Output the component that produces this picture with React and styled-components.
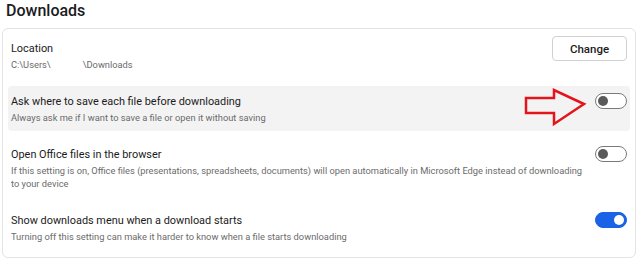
import React from "react";
import styled, { createGlobalStyle } from "styled-components";

const GlobalStyle = createGlobalStyle`
  html, body { margin: 0; padding: 0; background: #ffffff; }
  body { font-family: Roboto, "Open Sans", Arial, sans-serif; color: #1b1b1b; }
`;

const Page = styled.div`
  width: 640px;
  height: 260px;
  box-sizing: border-box;
  padding: 0 4px 0 2px;
  overflow: hidden;
`;

const Heading = styled.h2`
  margin: 0;
  padding-left: 4px;
  font-size: 16px;
  font-weight: 500;
  line-height: 22px;
  height: 28px;
  color: #1b1b1b;
`;

const Card = styled.section`
  border: 1px solid #e3e3e3;
  border-radius: 6px;
  padding: 0 5px 7px;
  display: flex;
  flex-direction: column;
  gap: 8px;
  background: #fff;
`;

const Row = styled.div`
  position: relative;
  display: flex;
  align-items: flex-start;
  justify-content: space-between;
  gap: 8px;
  padding: 7px 3px 7px;
  border-radius: 4px;
  background: ${(p) => (p.$highlight ? "#f3f3f3" : "transparent")};
`;

const TextBlock = styled.div`
  flex: 1;
  min-width: 0;
  margin-top: ${(p) => p.$offset || 0}px;
`;

const Title = styled.div`
  font-size: 10.9px;
  line-height: 17px;
  color: #1b1b1b;
`;

const Sub = styled.div`
  margin-top: 1px;
  font-size: 9.3px;
  line-height: 13px;
  color: #6b6b6b;
`;

const Redacted = styled.span`
  display: inline-block;
  width: 32px;
`;

const Button = styled.button`
  width: 75px;
  height: 25px;
  box-sizing: border-box;
  border: 1px solid #d1d1d1;
  border-radius: 4px;
  background: #fff;
  font-family: inherit;
  font-size: 11.5px;
  font-weight: 500;
  color: #1b1b1b;
  padding: 0;
  flex-shrink: 0;
`;

const Toggle = styled.div`
  position: relative;
  flex-shrink: 0;
  width: 32px;
  height: 16px;
  box-sizing: border-box;
  border-radius: 8px;
  border: 1px solid ${(p) => (p.$on ? "#1a62e6" : "#7a7a7a")};
  background: ${(p) => (p.$on ? "#1a62e6" : "#ffffff")};
`;

const Knob = styled.span`
  position: absolute;
  top: 2px;
  ${(p) => (p.$on ? "right: 2px;" : "left: 2px;")}
  width: 10px;
  height: 10px;
  border-radius: 50%;
  background: ${(p) => (p.$on ? "#ffffff" : "#5a5a5a")};
`;

const Arrow = styled.svg`
  position: absolute;
  right: 42px;
  top: 2px;
`;

function Switch({ on }) {
  return (
    <Toggle $on={on}>
      <Knob $on={on} />
    </Toggle>
  );
}

export default function App() {
  return (
    <>
      <GlobalStyle />
      <Page>
        <Heading>Downloads</Heading>
        <Card>
          <Row>
            <TextBlock $offset={4}>
              <Title>Location</Title>
              <Sub>
                C:\Users\<Redacted />\Downloads
              </Sub>
            </TextBlock>
            <Button>Change</Button>
          </Row>
          <Row $highlight>
            <TextBlock>
              <Title>Ask where to save each file before downloading</Title>
              <Sub>Always ask me if I want to save a file or open it without saving</Sub>
            </TextBlock>
            <Arrow width="64" height="40" viewBox="0 0 64 40">
              <polygon
                points="2,10 30,10 30,2 60,16 30,36 30,25 2,25"
                fill="none"
                stroke="#e3141b"
                strokeWidth="2.5"
                strokeLinejoin="miter"
              />
            </Arrow>
            <Switch on={false} />
          </Row>
          <Row>
            <TextBlock>
              <Title>Open Office files in the browser</Title>
              <Sub>
                If this setting is on, Office files (presentations, spreadsheets, documents) will open automatically in Microsoft Edge instead of downloading to your device
              </Sub>
            </TextBlock>
            <Switch on={false} />
          </Row>
          <Row>
            <TextBlock>
              <Title>Show downloads menu when a download starts</Title>
              <Sub>Turning off this setting can make it harder to know when a file starts downloading</Sub>
            </TextBlock>
            <Switch on={true} />
          </Row>
        </Card>
      </Page>
    </>
  );
}
